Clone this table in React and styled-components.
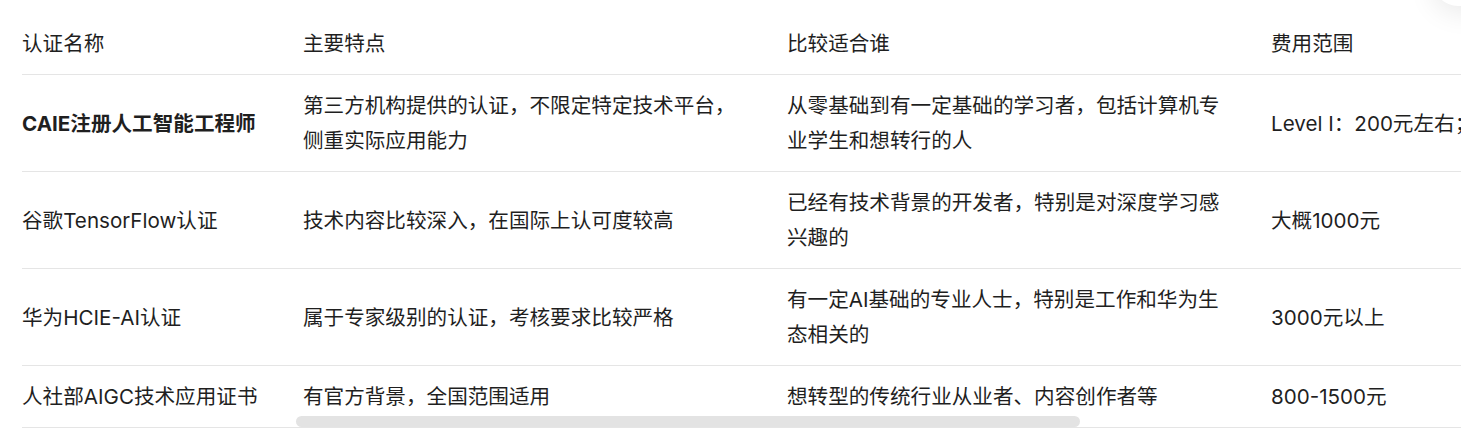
import React from "react";
import styled, { createGlobalStyle } from "styled-components";

const GlobalStyle = createGlobalStyle`
  html, body {
    margin: 0;
    padding: 0;
    background: #ffffff;
    overflow: hidden;
  }
  body {
    font-family: Inter, "Noto Sans CJK SC", sans-serif;
    color: #1f1f1f;
  }
`;

const Page = styled.div`
  position: relative;
  width: 1461px;
  height: 429px;
  overflow: hidden;
`;

const ScrollArea = styled.div`
  position: relative;
  margin-top: 13px;
  padding-left: 22px;
  overflow: hidden;
`;

const Table = styled.table`
  border-collapse: collapse;
  table-layout: fixed;
  width: 1760px;
  font-size: 20.6px;
  line-height: 35px;
`;

const Cell = styled.td`
  padding: 13px 40px 13px 0;
  text-align: left;
  vertical-align: middle;
  font-weight: ${(p) => (p.$strong ? 700 : 400)};
  white-space: ${(p) => (p.$nowrap ? "nowrap" : "normal")};
  border-bottom: 1px solid #e5e5e5;
`;

const HeadCell = styled(Cell).attrs({ as: "th" })`
  font-weight: 400;
`;

const Thumb = styled.div`
  position: absolute;
  left: 296px;
  bottom: 1px;
  width: 784px;
  height: 11px;
  border-radius: 6px;
  background: #e3e3e3;
`;

const FloatCorner = styled.div`
  position: absolute;
  left: 1433px;
  top: -44px;
  width: 120px;
  height: 50px;
  border-radius: 26px;
  background: #ffffff;
  box-shadow: 0 6px 28px rgba(0, 0, 0, 0.09);
`;

const columns = [
  { title: "认证名称", width: 281 },
  { title: "主要特点", width: 484 },
  { title: "比较适合谁", width: 484 },
  { title: "费用范围", width: 511 },
];

const rows = [
  {
    name: "CAIE注册人工智能工程师",
    strong: true,
    feature: "第三方机构提供的认证，不限定特定技术平台，侧重实际应用能力",
    audience: "从零基础到有一定基础的学习者，包括计算机专业学生和想转行的人",
    cost: "Level I：200元左右；Level II：500元左右",
  },
  {
    name: "谷歌TensorFlow认证",
    feature: "技术内容比较深入，在国际上认可度较高",
    audience: "已经有技术背景的开发者，特别是对深度学习感兴趣的",
    cost: "大概1000元",
  },
  {
    name: "华为HCIE-AI认证",
    feature: "属于专家级别的认证，考核要求比较严格",
    audience: "有一定AI基础的专业人士，特别是工作和华为生态相关的",
    cost: "3000元以上",
  },
  {
    name: "人社部AIGC技术应用证书",
    feature: "有官方背景，全国范围适用",
    audience: "想转型的传统行业从业者、内容创作者等",
    cost: "800-1500元",
  },
];

export default function App() {
  return (
    <Page>
      <GlobalStyle />
      <ScrollArea>
        <Table>
          <colgroup>
            {columns.map((c) => (
              <col key={c.title} style={{ width: c.width }} />
            ))}
          </colgroup>
          <thead>
            <tr>
              {columns.map((c) => (
                <HeadCell key={c.title}>{c.title}</HeadCell>
              ))}
            </tr>
          </thead>
          <tbody>
            {rows.map((r) => (
              <tr key={r.name}>
                <Cell $strong={r.strong}>{r.name}</Cell>
                <Cell>{r.feature}</Cell>
                <Cell>{r.audience}</Cell>
                <Cell $nowrap>{r.cost}</Cell>
              </tr>
            ))}
          </tbody>
        </Table>
        <Thumb />
      </ScrollArea>
      <FloatCorner />
    </Page>
  );
}
